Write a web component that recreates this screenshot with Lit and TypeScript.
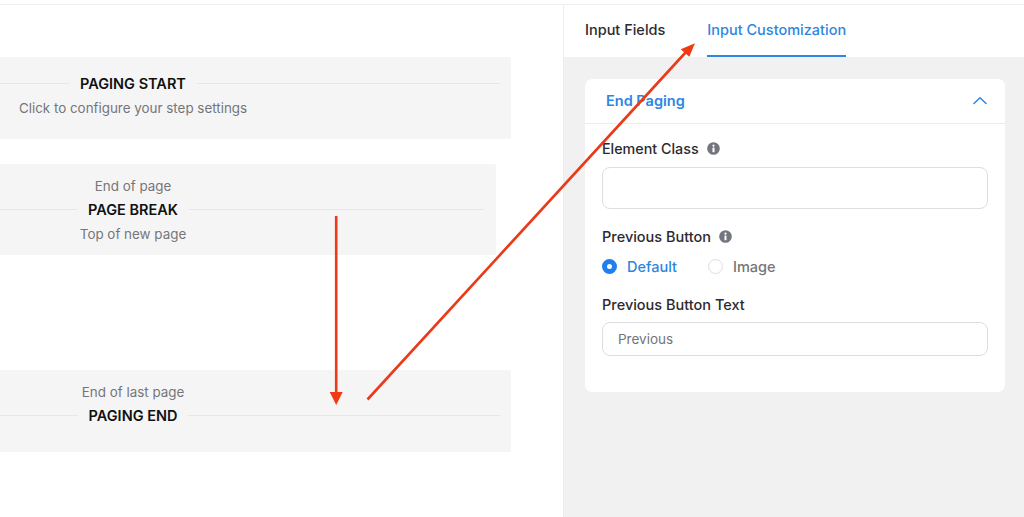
import { LitElement, html, css } from "lit";
import { customElement } from "lit/decorators.js";

const info = html`<svg class="info" viewBox="0 0 14 14" aria-hidden="true"><circle cx="7" cy="7" r="6.8" fill="#73757f"/><rect x="5.900" y="6" width="2.200" height="5" rx=".4" fill="#fff"/><circle cx="7" cy="4" r="1.200" fill="#fff"/></svg>`;

@customElement("app-root")
export class AppRoot extends LitElement {
  static styles = css`
    :host { display: block; width: 1024px; height: 517px; position: relative; overflow: hidden; background: #fff; font-family: Inter, "Liberation Sans", sans-serif; }
    .page { display: flex; margin-top: 4px; border-top: 1px solid #efefef; box-sizing: border-box; height: 513px; }
    .left { width: 563px; flex: none; overflow: hidden; box-sizing: border-box; padding-top: 52px; }
    .block { background: #f5f5f6; border-radius: 2px; box-sizing: border-box; display: flex; flex-direction: column; align-items: center; margin-left: -245px; width: 756px; padding: 0 11px; font-size: 13.4px; line-height: 20px; color: #75757a; }
    .b1 { height: 82px; padding-top: 14px; }
    .b2 { height: 91px; width: 726px; margin-left: -230px; margin-top: 25px; padding: 12px 12px 0; }
    .b3 { height: 82px; margin-top: 115px; padding-top: 12px; }
    .head { display: flex; align-items: center; align-self: stretch; gap: 11px; font-size: 14.5px; font-weight: 600; color: #111; height: 24px; }
    .head::before, .head::after { content: ""; flex: 1; height: 1px; background: #e6e6e8; }
    .head span { margin-top: 2px; }
    .lead { margin-bottom: 1px; }
    .sub { margin-top: 3px; }
    .right { flex: 1; border-left: 1px solid #ededed; display: flex; flex-direction: column; }
    .tabs { height: 52px; display: flex; gap: 42px; padding-left: 21px; box-sizing: border-box; font-size: 14.5px; font-weight: 500; color: #2b2b2f; }
    .tab { padding-top: 15px; line-height: 20px; box-sizing: border-box; height: 52px; }
    .tab.active { color: #2d86e0; border-bottom: 2px solid #2d86e0; }
    .panel { flex: 1; background: #f1f1f1; padding: 22px 19px 0 21px; }
    .card { background: #fff; border-radius: 7px; height: 313px; box-sizing: border-box; }
    .card-head { height: 44px; border-bottom: 1px solid #ececec; display: flex; align-items: center; justify-content: space-between; padding: 0 18px 0 21px; font-size: 14.5px; font-weight: 600; color: #2d86e0; }
    .card-head span { margin-bottom: 2px; }
    .chev { width: 14px; height: 9px; margin-bottom: 2px; }
    .body { padding: 14px 17px 0; }
    .label { display: flex; align-items: center; gap: 8px; height: 20px; font-size: 14.5px; font-weight: 500; line-height: 20px; color: #2b2b2f; }
    .label span { margin-top: 2px; }
    .narrow { font-size: 14.3px; }
    .info { width: 13px; height: 13px; }
    .input { border: 1px solid #dedee0; border-radius: 8px; background: #fff; box-sizing: border-box; margin-top: 9px; width: 386px; font-size: 13.5px; color: #73757a; padding-left: 15px; display: flex; align-items: center; }
    .i1 { height: 42px; margin-bottom: 17px; }
    .i2 { height: 34px; margin-top: 8px; }
    .radios { display: flex; align-items: center; height: 20px; margin-top: 10px; margin-bottom: 18px; font-size: 14.5px; font-weight: 500; line-height: 20px; color: #75757a; }
    .radios .t { margin-top: 2px; }
    .radio { width: 15px; height: 15px; border-radius: 50%; border: 1px solid #dedee0; box-sizing: border-box; margin-right: 10px; }
    .radio.on { border: 5px solid #1f7fef; background: #fff; }
    .radios .def { color: #2d86e0; margin-right: 31px; }
    .arrows { position: absolute; inset: 0; width: 1024px; height: 517px; pointer-events: none; }
  `;

  render() {
    return html`
      <div class="page">
        <div class="left">
          <div class="block b1">
            <div class="head"><span>PAGING START</span></div>
            <div class="sub">Click to configure your step settings</div>
          </div>
          <div class="block b2">
            <div class="lead">End of page</div>
            <div class="head"><span>PAGE BREAK</span></div>
            <div class="sub">Top of new page</div>
          </div>
          <div class="block b3">
            <div class="lead">End of last page</div>
            <div class="head"><span>PAGING END</span></div>
          </div>
        </div>
        <div class="right">
          <div class="tabs">
            <div class="tab">Input Fields</div>
            <div class="tab active">Input Customization</div>
          </div>
          <div class="panel">
            <div class="card">
              <div class="card-head">
                <span>End Paging</span>
                <svg class="chev" viewBox="0 0 14 9" fill="none" stroke="#2d86e0" stroke-width="1.500" stroke-linecap="round" stroke-linejoin="round"><path d="M1 7.500 7 1.700l6 5.800"/></svg>
              </div>
              <div class="body">
                <div class="label"><span class="narrow">Element Class</span> ${info}</div>
                <div class="input i1"></div>
                <div class="label"><span>Previous Button</span> ${info}</div>
                <div class="radios">
                  <span class="radio on"></span><span class="t def">Default</span>
                  <span class="radio"></span><span class="t">Image</span>
                </div>
                <div class="label"><span>Previous Button Text</span></div>
                <div class="input i2">Previous</div>
              </div>
            </div>
          </div>
        </div>
      </div>
      <svg class="arrows" viewBox="0 0 1024 517" aria-hidden="true">
        <path d="M336.200 216V394M367.500 399.500 686 52" stroke="#ea3a1a" stroke-width="2.600" fill="none"/>
        <path d="M329.700 392h13L336.200 405zM695 43.300l-14.300 6 8.600 7.400z" fill="#f23a12"/>
      </svg>
    `;
  }
}
